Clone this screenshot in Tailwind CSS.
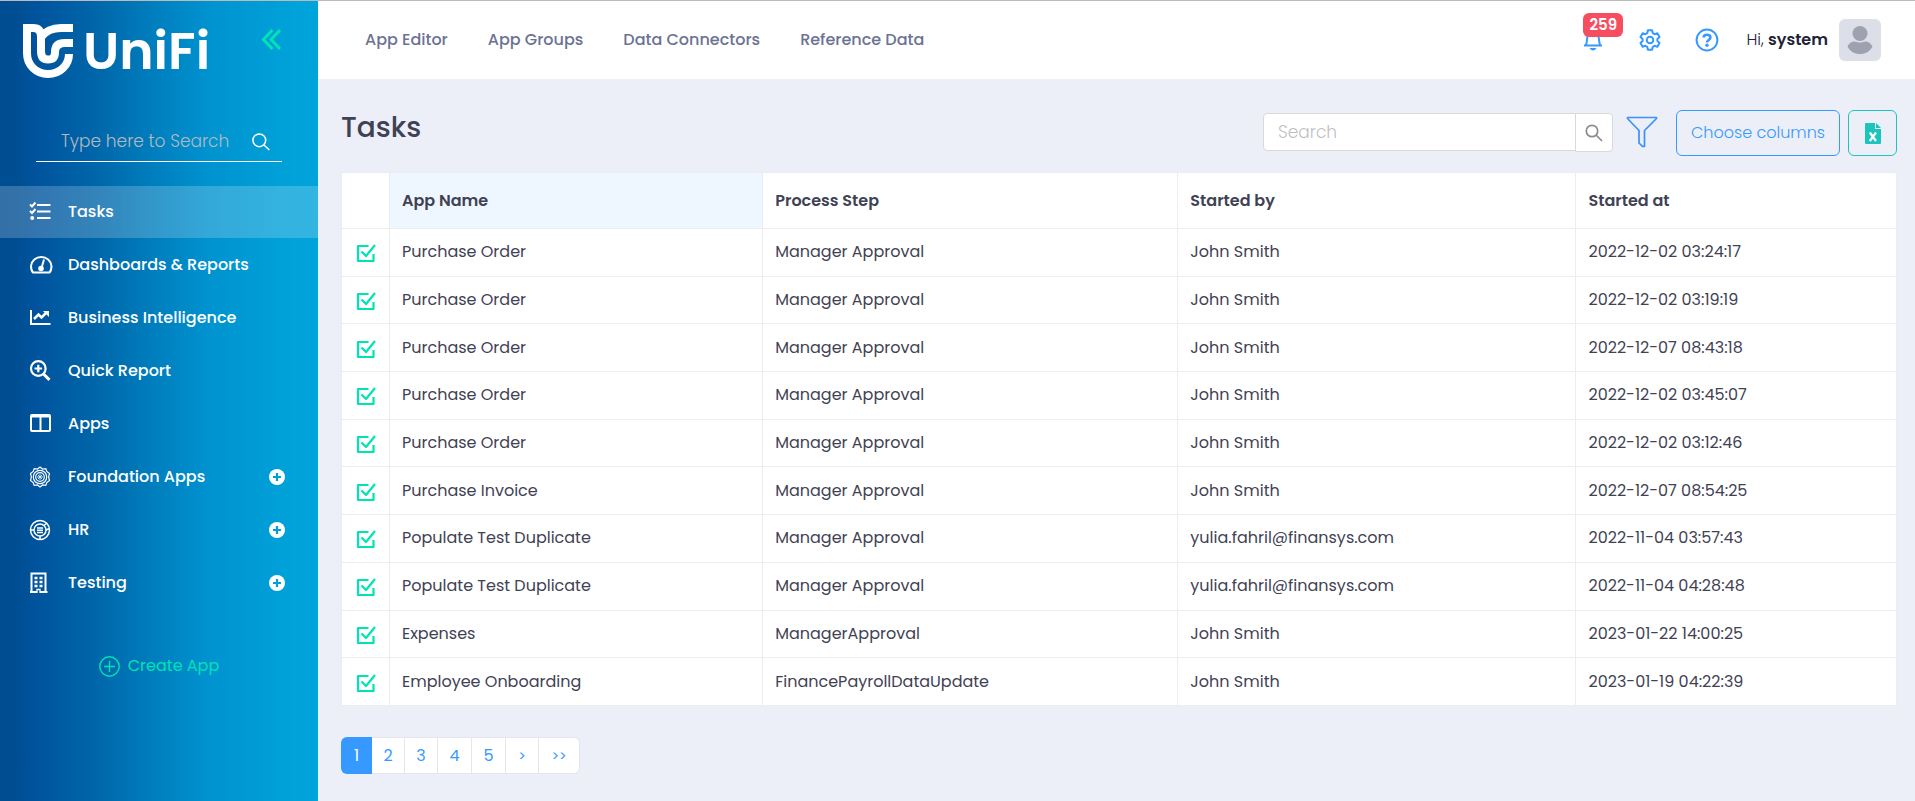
<!DOCTYPE html>
<html lang="en">
<head>
<meta charset="utf-8">
<meta name="viewport" content="width=device-width, initial-scale=1">
<title>UniFi - Tasks</title>
<script src="https://cdn.jsdelivr.net/npm/@tailwindcss/browser@4"></script>
</head>
<body class="min-h-screen border-t border-[#bbbbbb] bg-[#eceff7] font-[Poppins,Inter,sans-serif] text-base text-[#3f4254]">
<div class="flex min-h-[calc(100vh-1px)]">

  <aside class="w-[318px] shrink-0 bg-[linear-gradient(90deg,#004d91_0%,#004f94_6%,#00549e_12%,#0066a9_30%,#007bbb_46%,#0093d0_66%,#00a2d9_92%,#00a3da_100%)] text-white">
    <div class="flex items-start justify-between pt-[23px] pr-[37px] pl-[23px]">
      <a href="#" class="flex items-center gap-[10px]" aria-label="UniFi home">
        <svg class="h-[54px] w-[50px]" viewBox="0 0 50 54" fill="none" stroke="#fff" stroke-width="8">
          <path d="M0 4H10Q18 4 18 13V27Q18 35.500 25 35.500Q32 35.500 32 28Q32 19 42 19H50"/>
          <path d="M4 0V29C4 41 13 50 25 50C37 50 46 41 46 30"/>
          <path d="M18 13Q25 4 38 4H50"/>
        </svg>
        <span class="text-[52px] leading-[54px] font-semibold">UniFi</span>
      </a>
      <button type="button" class="mt-[5px]" aria-label="Collapse menu">
        <svg class="h-[21px] w-5" viewBox="0 0 20 21" fill="none" stroke="#00e3b4" stroke-width="3"><path d="M11.500 1L2.500 10.500L11.500 20M19 1L10 10.500L19 20"/></svg>
      </button>
    </div>

    <label class="mx-9 mt-10 flex h-11 items-center border-b border-white pt-1 pr-3 pl-[25px]">
      <input type="search" aria-label="Search menu" placeholder="Type here to Search" class="w-full min-w-0 flex-1 bg-transparent text-[17px] font-light outline-none placeholder:text-[#b5b9c0]">
      <svg class="h-[18px] w-[18px] shrink-0" viewBox="0 0 18 18" fill="none" stroke="#fff" stroke-width="1.500"><circle cx="7.300" cy="7.300" r="6.400"/><path d="M12 12L17.300 17"/></svg>
    </label>

    <nav class="mt-6 flex flex-col gap-px text-base font-medium" aria-label="Main">
      <a href="#" class="flex h-[52px] items-center gap-[17px] bg-white/20 pr-[33px] pl-[29px]">
        <svg class="h-[22px] w-[22px]" viewBox="0 0 22 22" fill="none" stroke="#fff" stroke-width="2"><path d="M8 4H21.500M8 10.500H21.500M8 17H21.500"/><path d="M1 3.500L3 5.500L6.500 1.500M1 10L3 12L6.500 8"/><circle cx="3.200" cy="17" r="2" fill="#fff" stroke="none"/></svg>
        <span>Tasks</span>
      </a>
      <a href="#" class="flex h-[52px] items-center gap-[15px] pr-[33px] pl-[29px]">
        <svg class="h-6 w-6" viewBox="0 0 24 24" fill="none" stroke="#fff" stroke-width="2"><path d="M4 19.500C2.500 18 2 15.500 2 13A10.300 10 0 0 1 22.500 13C22.500 15.500 22 18 20.500 19.500Z" stroke-linejoin="round"/><circle cx="12" cy="15.500" r="2.800" fill="#fff" stroke="none"/><path d="M12.500 15L15 6.500"/></svg>
        <span>Dashboards &amp; Reports</span>
      </a>
      <a href="#" class="flex h-[52px] items-center gap-[17px] pr-[33px] pl-[29px]">
        <svg class="h-[22px] w-[22px]" viewBox="0 0 22 22" fill="none" stroke="#fff" stroke-width="2"><path d="M2 3V17H21.500"/><path d="M5 12L9.500 7.500L12.500 10.500L17.500 5.500" stroke-width="2.500"/><path d="M14 4H20V10Z" fill="#fff" stroke="none"/></svg>
        <span>Business Intelligence</span>
      </a>
      <a href="#" class="flex h-[52px] items-center gap-[17px] pr-[33px] pl-[29px]">
        <svg class="h-[22px] w-[22px]" viewBox="0 0 22 22" fill="none" stroke="#fff" stroke-width="2.200"><circle cx="9.300" cy="8.500" r="7.300"/><path d="M14.500 14L20.500 19.800" stroke-width="3"/><path d="M9.300 4.700V12.300M5.500 8.500H13.100"/></svg>
        <span>Quick Report</span>
      </a>
      <a href="#" class="flex h-[52px] items-center gap-[17px] pr-[33px] pl-[29px]">
        <svg class="h-[22px] w-[22px]" viewBox="0 0 22 22" fill="none" stroke="#fff" stroke-width="2"><rect x="2" y="2" width="19" height="16" rx="1"/><path d="M11.500 3V18"/><path d="M2 3H21" stroke-width="3"/></svg>
        <span>Apps</span>
      </a>
      <a href="#" class="flex h-[52px] items-center gap-[17px] pr-[33px] pl-[29px]">
        <svg class="h-[22px] w-[22px]" viewBox="0 0 22 22" fill="none" stroke="#fff" stroke-width="1.200"><path d="M11 1L13.500 3L16.800 2.600L17.800 5.500L20.500 7.500L19.600 11L20.500 14.500L17.800 16.500L16.800 19.400L13.500 19L11 21L8.500 19L5.200 19.400L4.200 16.500L1.500 14.500L2.400 11L1.500 7.500L4.200 5.500L5.200 2.600L8.500 3Z"/><circle cx="11" cy="11" r="6.700"/><circle cx="11" cy="11" r="4.300"/><path d="M11 8V14M8 11H14M9 9L13 13M13 9L9 13" stroke-width=".8"/></svg>
        <span class="flex-1">Foundation Apps</span>
        <svg class="h-4 w-4" viewBox="0 0 16 16"><circle cx="8" cy="8" r="8" fill="#fff"/><path d="M8 4V12M4 8H12" stroke="#009fd8" stroke-width="2.200"/></svg>
      </a>
      <a href="#" class="flex h-[52px] items-center gap-[17px] pr-[33px] pl-[29px]">
        <svg class="h-[22px] w-[22px]" viewBox="0 0 22 22" fill="none" stroke="#fff" stroke-width="1.500"><circle cx="11" cy="11" r="9.500"/><circle cx="11" cy="11" r="6"/><path d="M1.500 11H5M17 11L20.500 9.500M11 17V20.500M15 6.500L18 4M8 9H14M8 11.200H14M8 13.400H14"/></svg>
        <span class="flex-1">HR</span>
        <svg class="h-4 w-4" viewBox="0 0 16 16"><circle cx="8" cy="8" r="8" fill="#fff"/><path d="M8 4V12M4 8H12" stroke="#009fd8" stroke-width="2.200"/></svg>
      </a>
      <a href="#" class="flex h-[52px] items-center gap-[17px] pr-[33px] pl-[29px]">
        <svg class="h-[22px] w-[22px]" viewBox="0 0 22 22" fill="none" stroke="#fff"><path d="M2.500 20V1.500H16.500V20" stroke-width="2"/><path d="M1 20H8M11 20H18.500" stroke-width="2"/><path d="M5.500 6H8.500M10.500 6H13.500M5.500 10H8.500M10.500 10H13.500M5.500 14H8.500M10.500 14H13.500" stroke-width="2.600"/><path d="M8 21V17.500H11V21" stroke-width="1.300"/></svg>
        <span class="flex-1">Testing</span>
        <svg class="h-4 w-4" viewBox="0 0 16 16"><circle cx="8" cy="8" r="8" fill="#fff"/><path d="M8 4V12M4 8H12" stroke="#009fd8" stroke-width="2.200"/></svg>
      </a>
    </nav>

    <button type="button" class="mx-auto mt-11 flex h-[26px] items-center gap-2 text-base text-[#00e3b4]">
      <svg class="h-[21px] w-[21px]" viewBox="0 0 21 21" fill="none" stroke="currentColor" stroke-width="1.400"><circle cx="10.500" cy="10.500" r="9.700"/><path d="M10.500 5V16M5 10.500H16"/></svg>
      Create App
    </button>
  </aside>

  <div class="min-w-0 flex-1">
    <header class="flex h-[78px] items-center justify-between bg-white pr-[34px] pl-[47px]">
      <nav class="flex gap-10 text-base font-medium text-[#6c7293]" aria-label="Tools">
        <a href="#">App Editor</a>
        <a href="#">App Groups</a>
        <a href="#">Data Connectors</a>
        <a href="#">Reference Data</a>
      </nav>
      <div class="flex items-center">
        <button type="button" class="relative mr-9" aria-label="Notifications, 259 unread">
          <svg class="h-6 w-5" viewBox="0 0 20 24" fill="none" stroke="#3699ff" stroke-width="2"><path d="M1 17.500H19M3 17C4 14 4 11 4.500 8C5 4 15 4 15.500 8C16 11 16 14 17 17"/><path d="M6.500 20H13.500Q12 22.500 10 22.500Q8 22.500 6.500 20Z" fill="#3699ff" stroke="none"/></svg>
          <span class="absolute -top-[15px] left-0 rounded-md bg-[#f64e60] px-[6px] text-[15px] leading-6 font-semibold text-white">259</span>
        </button>
        <button type="button" class="mr-[34px]" aria-label="Settings">
          <svg class="h-[22px] w-[22px]" viewBox="0 0 22 22" fill="none" stroke="#3699ff" stroke-width="2" stroke-linejoin="round"><path d="M8.900 1.300H13.100L13.800 4.200L15.600 5.200L18.400 4.300L20.500 8L18.400 10V12L20.500 14L18.400 17.700L15.600 16.800L13.800 17.800L13.100 20.700H8.900L8.200 17.800L6.400 16.800L3.600 17.700L1.500 14L3.600 12V10L1.500 8L3.600 4.300L6.400 5.200L8.200 4.200Z"/><circle cx="11" cy="11" r="3.300"/></svg>
        </button>
        <button type="button" class="mr-[27px]" aria-label="Help">
          <svg class="h-6 w-6" viewBox="0 0 24 24" fill="none" stroke="#3699ff" stroke-width="2"><circle cx="12" cy="12" r="10.400"/><path d="M8.600 9.600C8.600 5.800 15.400 5.800 15.400 9.600C15.400 12 12 12 12 14.600" stroke-width="2.600"/><circle cx="12" cy="17.300" r="1.700" fill="#3699ff" stroke="none"/></svg>
        </button>
        <span class="mr-[11px] text-base text-[#212337]"><span class="font-light">Hi,</span> <span class="font-semibold">system</span></span>
        <span class="flex h-[42px] w-[42px] items-center justify-center rounded-md bg-[#dcdfe8]">
          <svg class="h-7 w-[26px]" viewBox="0 0 26 28" fill="#9fa1b0"><circle cx="13" cy="7.500" r="7.500"/><path d="M.5 20.500C4 14.500 8 15.500 10 16Q13 17 16 16C18 15.500 22 14.500 25.500 20.500C23 25.500 18.500 28 13 28C7.500 28 3 25.500 .5 20.500Z"/></svg>
        </span>
      </div>
    </header>

    <main class="pr-[18px] pb-6 pl-[23px]">
      <div class="flex items-start justify-between pt-[31px]">
        <h1 class="text-[28px] leading-9 font-medium">Tasks</h1>
        <div class="flex items-start">
          <form class="mt-[3px] flex items-start" role="search" onsubmit="return false">
            <input type="search" aria-label="Search tasks" placeholder="Search" class="h-[38px] w-[313px] rounded-l-sm border border-[#d9d9d9] bg-white px-[14px] text-[17px] font-light outline-none placeholder:text-[#bfbfbf]">
            <button type="submit" aria-label="Search" class="-ml-px flex h-[39px] w-[38px] items-center justify-center rounded-r-sm border border-[#d9d9d9] bg-white">
              <svg class="h-[18px] w-[18px]" viewBox="0 0 18 18" fill="none" stroke="#8c8c8c" stroke-width="1.700"><circle cx="7" cy="7" r="5.700"/><path d="M11 11L17 17"/></svg>
            </button>
          </form>
          <button type="button" aria-label="Filter" class="mt-[6px] ml-[13px]">
            <svg class="h-8 w-8" viewBox="0 0 32 32" fill="none" stroke="#3d8fff" stroke-width="1.700" stroke-linejoin="round"><path d="M1.500 1.500H30.500V2.500L18.500 14.500V30.300H16.500L13 27V14.500L1.500 2.500Z"/></svg>
          </button>
          <button type="button" class="ml-[18px] h-[46px] w-[164px] rounded-md border border-[#3699ff] text-base font-light text-[#3699ff]">Choose columns</button>
          <button type="button" aria-label="Export to Excel" class="ml-2 flex h-[46px] w-[49px] items-center justify-center rounded-md border border-[#1bc5bd]">
            <svg class="h-[21px] w-4" viewBox="0 0 16 21"><path d="M1 0H10V6H16V20Q16 21 15 21H1Q0 21 0 20V1Q0 0 1 0Z" fill="#1bc5bd"/><path d="M11 0L16 5H11Z" fill="#1bc5bd"/><path d="M4.800 9.500L11 18M11 9.500L4.800 18" stroke="#fff" stroke-width="2.200"/></svg>
          </button>
        </div>
      </div>

      <table class="mt-4 h-[534px] w-full table-fixed border-collapse border border-[#ebedf3] bg-white text-left">
        <colgroup><col class="w-[48px]"><col class="w-[24%]"><col class="w-[26.7%]"><col class="w-[25.6%]"><col></colgroup>
        <thead>
          <tr class="h-[56px]">
            <td class="border border-[#ebedf3]"></td>
            <th scope="col" class="border border-[#ebedf3] bg-[#eef7ff] px-3 font-semibold">App Name</th>
            <th scope="col" class="border border-[#ebedf3] px-3 font-semibold">Process Step</th>
            <th scope="col" class="border border-[#ebedf3] px-3 font-semibold">Started by</th>
            <th scope="col" class="border border-[#ebedf3] px-3 font-semibold">Started at</th>
          </tr>
        </thead>
        <tbody id="tasks"></tbody>
      </table>

      <nav class="mt-[31px] flex text-base text-[#3699ff]" aria-label="Pages">
        <a href="#" aria-current="page" class="flex h-[37px] w-[31px] items-center justify-center rounded-l-md bg-[#3699ff] text-white">1</a>
        <a href="#" class="flex h-[37px] w-[33px] items-center justify-center border border-l-0 border-[#e4e6ef] bg-white">2</a>
        <a href="#" class="flex h-[37px] w-[33px] items-center justify-center border border-l-0 border-[#e4e6ef] bg-white">3</a>
        <a href="#" class="flex h-[37px] w-[34px] items-center justify-center border border-l-0 border-[#e4e6ef] bg-white">4</a>
        <a href="#" class="flex h-[37px] w-[34px] items-center justify-center border border-l-0 border-[#e4e6ef] bg-white">5</a>
        <a href="#" class="flex h-[37px] w-[33px] items-center justify-center border border-l-0 border-[#e4e6ef] bg-white text-sm">&gt;</a>
        <a href="#" class="flex h-[37px] w-[41px] items-center justify-center rounded-r-md border border-l-0 border-[#e4e6ef] bg-white text-sm">&gt;&gt;</a>
      </nav>
    </main>
  </div>
</div>

<template id="task-row">
  <tr>
    <td class="border border-[#ebedf3]">
      <a href="#" aria-label="Open task" class="flex justify-center pt-[2px]">
        <svg class="h-5 w-5" viewBox="0 0 20 20" fill="none" stroke="#00e3b4" stroke-width="2.200" stroke-linejoin="round"><path d="M12.500 3H2V18H17.500V11"/><path d="M5.500 8.500L10 13L19 2"/></svg>
      </a>
    </td>
    <td class="border border-[#ebedf3] px-3"></td>
    <td class="border border-[#ebedf3] px-3"></td>
    <td class="border border-[#ebedf3] px-3"></td>
    <td class="border border-[#ebedf3] px-3"></td>
  </tr>
</template>
<script>
  const tasks = [
    ["Purchase Order", "Manager Approval", "John Smith", "2022-12-02 03:24:17"],
    ["Purchase Order", "Manager Approval", "John Smith", "2022-12-02 03:19:19"],
    ["Purchase Order", "Manager Approval", "John Smith", "2022-12-07 08:43:18"],
    ["Purchase Order", "Manager Approval", "John Smith", "2022-12-02 03:45:07"],
    ["Purchase Order", "Manager Approval", "John Smith", "2022-12-02 03:12:46"],
    ["Purchase Invoice", "Manager Approval", "John Smith", "2022-12-07 08:54:25"],
    ["Populate Test Duplicate", "Manager Approval", "yulia.fahril@finansys.com", "2022-11-04 03:57:43"],
    ["Populate Test Duplicate", "Manager Approval", "yulia.fahril@finansys.com", "2022-11-04 04:28:48"],
    ["Expenses", "ManagerApproval", "John Smith", "2023-01-22 14:00:25"],
    ["Employee Onboarding", "FinancePayrollDataUpdate", "John Smith", "2023-01-19 04:22:39"],
  ];
  const body = document.getElementById("tasks");
  const template = document.getElementById("task-row");
  for (const task of tasks) {
    const row = template.content.cloneNode(true);
    const cells = row.querySelectorAll("td");
    task.forEach((text, i) => { cells[i + 1].textContent = text; });
    body.append(row);
  }
</script>
</body>
</html>
